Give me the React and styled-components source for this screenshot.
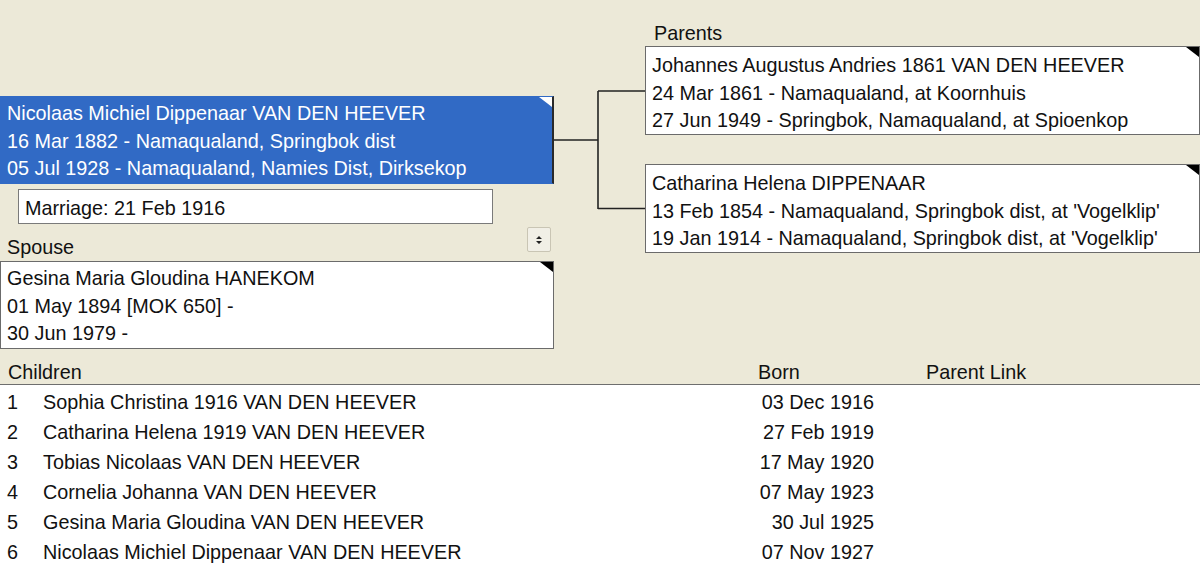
import React from 'react';
import styled, { createGlobalStyle } from 'styled-components';

const GlobalStyle = createGlobalStyle`
  html, body {
    margin: 0;
    padding: 0;
    background: #ece9d8;
  }
  body {
    font-family: "Liberation Sans", Arial, sans-serif;
    color: #111;
  }
`;

const Page = styled.div`
  width: 1200px;
  height: 576px;
  overflow: hidden;
  background: #ece9d8;
  font-size: 19.8px;
`;

const Tree = styled.div`
  display: grid;
  grid-template-columns: 554px 91px 555px;
  height: 360px;
`;

const LeftColumn = styled.div`
  display: flex;
  flex-direction: column;
  padding-top: 96px;
`;

const RightColumn = styled.div`
  display: flex;
  flex-direction: column;
  padding-top: 22px;
`;

const PersonBox = styled.div`
  position: relative;
  box-sizing: border-box;
  height: ${(p) => p.$height || 88}px;
  padding: ${(p) => p.$pt || 3}px 6px 0;
  line-height: 27.6px;
  white-space: nowrap;
  background: ${(p) => (p.$selected ? '#316ac5' : '#fff')};
  color: ${(p) => (p.$selected ? '#fff' : '#111')};
  border: 1px solid ${(p) => (p.$selected ? '#316ac5' : '#6b6b6b')};
  border-right-color: ${(p) => (p.$selected ? '#2a2a2a' : '#6b6b6b')};
  border-right-width: ${(p) => (p.$selected ? 2 : 1)}px;

  &::after {
    content: '';
    position: absolute;
    top: 0;
    right: 0;
    border-style: solid;
    border-width: 0 13px 10px 0;
    border-color: transparent ${(p) => (p.$selected ? '#fff' : '#000')} transparent transparent;
  }
`;

const MarriageBox = styled.div`
  box-sizing: border-box;
  margin: 5px 0 0 18px;
  width: 475px;
  height: 35px;
  padding: 0 6px;
  line-height: 36px;
  background: #fff;
  border: 1px solid #7a7a7a;
`;

const SpouseHeader = styled.div`
  display: flex;
  align-items: center;
  justify-content: space-between;
  height: 37px;
  padding: 0 3px 0 7px;
  box-sizing: border-box;
`;

const Label = styled.div`
  padding-top: ${(p) => p.$pt || 0}px;
  padding-left: ${(p) => p.$pl || 0}px;
  height: ${(p) => p.$h || 'auto'};
  line-height: 22px;
`;

const SpinButton = styled.div`
  display: flex;
  align-items: center;
  justify-content: center;
  width: 24px;
  height: 25px;
  margin-top: -6px;
  box-sizing: border-box;
  background: #f1efe6;
  border: 1px solid #c9c5b4;
  border-radius: 2px;
`;

const ParentGap = styled.div`
  height: 29px;
`;

const Children = styled.div`
  display: flex;
  flex-direction: column;
`;

const HeaderRow = styled.div`
  display: grid;
  grid-template-columns: 750px 168px 1fr;
  height: 25px;
  line-height: 24px;
  padding-left: 8px;
  box-sizing: border-box;
  border-bottom: 1px solid #6e6e6e;
`;

const HeaderCell = styled.div`
  white-space: nowrap;
`;

const List = styled.div`
  background: #fff;
  height: 216px;
  padding-top: 2px;
`;

const ChildRow = styled.div`
  display: grid;
  grid-template-columns: 43px 711px 120px 1fr;
  height: 30px;
  line-height: 30px;
  white-space: nowrap;
`;

const Num = styled.div`
  padding-left: 7px;
`;

const Born = styled.div`
  text-align: right;
`;

const Connector = () => (
  <svg width="91" height="360" viewBox="0 0 91 360">
    <g stroke="#222" strokeWidth="1.6" fill="none">
      <path d="M0 140 H44" />
      <path d="M44 91 V209" />
      <path d="M44 91 H91" />
      <path d="M44 208.5 H91" />
    </g>
  </svg>
);

const SpinIcon = () => (
  <svg width="8" height="10" viewBox="0 0 8 10">
    <path d="M4 1 L7 4 H1 Z M4 9 L7 6 H1 Z" fill="#222" />
  </svg>
);

const children = [
  ['1', 'Sophia Christina 1916 VAN DEN HEEVER', '03 Dec 1916'],
  ['2', 'Catharina Helena 1919 VAN DEN HEEVER', '27 Feb 1919'],
  ['3', 'Tobias Nicolaas VAN DEN HEEVER', '17 May 1920'],
  ['4', 'Cornelia Johanna VAN DEN HEEVER', '07 May 1923'],
  ['5', 'Gesina Maria Gloudina VAN DEN HEEVER', '30 Jul 1925'],
  ['6', 'Nicolaas Michiel Dippenaar VAN DEN HEEVER', '07 Nov 1927'],
];

const App = () => {
  return (
    <Page>
      <GlobalStyle />
      <Tree>
        <LeftColumn>
          <PersonBox $selected $pt={3}>
            <div>Nicolaas Michiel Dippenaar VAN DEN HEEVER</div>
            <div>16 Mar 1882 - Namaqualand, Springbok dist</div>
            <div>05 Jul 1928 - Namaqualand, Namies Dist, Dirksekop</div>
          </PersonBox>
          <MarriageBox>Marriage: 21 Feb 1916</MarriageBox>
          <SpouseHeader>
            <Label $pt={8}>Spouse</Label>
            <SpinButton>
              <SpinIcon />
            </SpinButton>
          </SpouseHeader>
          <PersonBox $pt={3}>
            <div>Gesina Maria Gloudina HANEKOM</div>
            <div>01 May 1894 [MOK 650] -</div>
            <div>30 Jun 1979 -</div>
          </PersonBox>
        </LeftColumn>
        <Connector />
        <RightColumn>
          <Label $pl={9} $h="24px">Parents</Label>
          <PersonBox $height={89} $pt={5}>
            <div>Johannes Augustus Andries 1861 VAN DEN HEEVER</div>
            <div>24 Mar 1861 - Namaqualand, at Koornhuis</div>
            <div>27 Jun 1949 - Springbok, Namaqualand, at Spioenkop</div>
          </PersonBox>
          <ParentGap />
          <PersonBox $height={89} $pt={5}>
            <div>Catharina Helena DIPPENAAR</div>
            <div>13 Feb 1854 - Namaqualand, Springbok dist, at 'Vogelklip'</div>
            <div>19 Jan 1914 - Namaqualand, Springbok dist, at 'Vogelklip'</div>
          </PersonBox>
        </RightColumn>
      </Tree>
      <Children>
        <HeaderRow>
          <HeaderCell>Children</HeaderCell>
          <HeaderCell>Born</HeaderCell>
          <HeaderCell>Parent Link</HeaderCell>
        </HeaderRow>
        <List>
          {children.map(([n, name, born]) => (
            <ChildRow key={n}>
              <Num>{n}</Num>
              <div>{name}</div>
              <Born>{born}</Born>
              <div />
            </ChildRow>
          ))}
        </List>
      </Children>
    </Page>
  );
};

export default App;
